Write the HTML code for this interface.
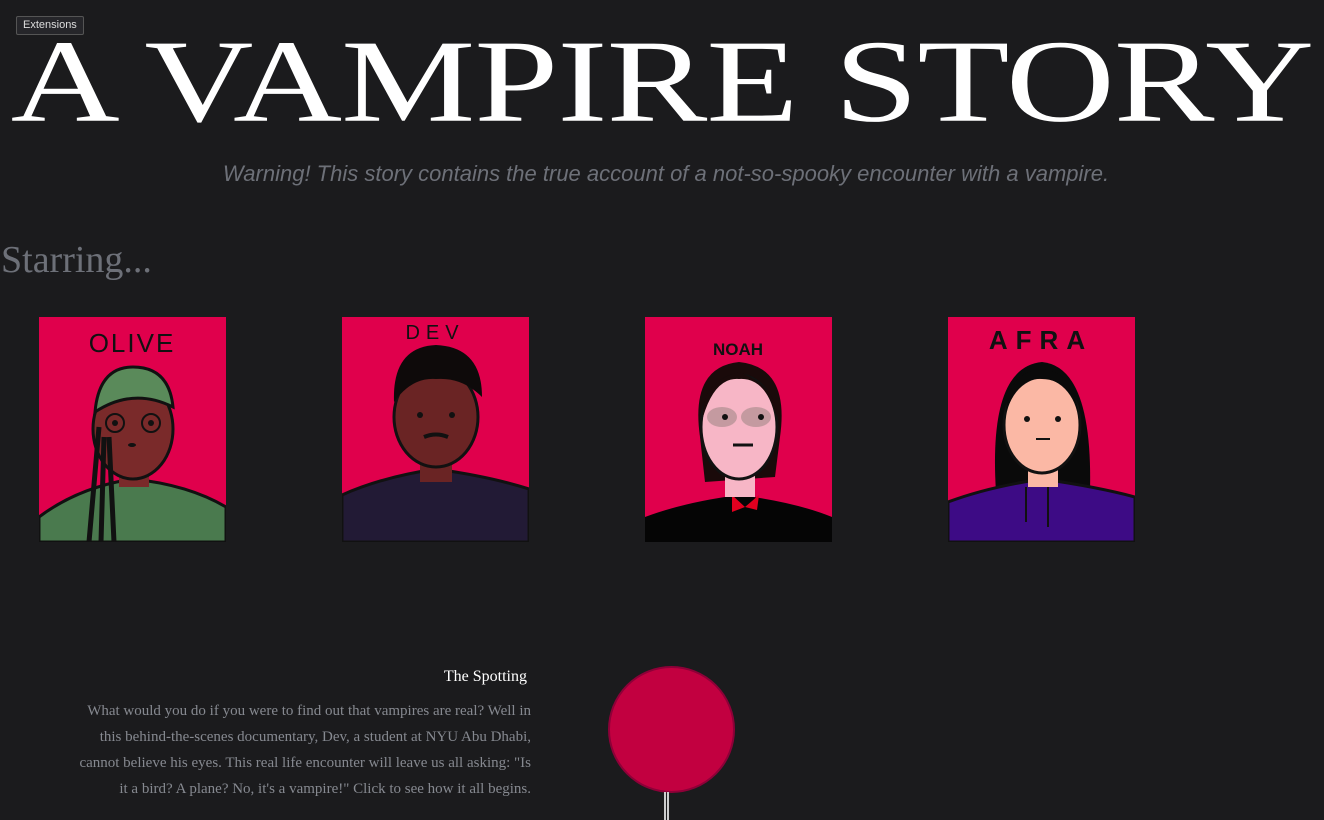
<!DOCTYPE html>
<html><head><meta charset="utf-8"><style>
html,body{margin:0;padding:0;background:#1b1b1d;width:1324px;height:820px;overflow:hidden}
body{position:relative;font-family:"Liberation Serif",serif}
.ext{position:absolute;left:16px;top:16px;height:17px;padding:0 6px;border:1px solid #555;background:#26262a;color:#ddd;font:11px "Liberation Sans",sans-serif;line-height:17px;border-radius:2px;z-index:2}
h1{position:absolute;left:0;top:-4px;width:1324px;margin:0;text-align:center;color:#fff;font-weight:normal;font-size:151px;line-height:170px;white-space:nowrap;letter-spacing:-1px;transform:scaleY(0.78);transform-origin:50% 50%}
.warn{position:absolute;left:0;width:1332px;top:161px;text-align:center;color:#6d7078;font:italic 22px "Liberation Sans",sans-serif}
.star{position:absolute;left:1px;top:238px;color:#6d7078;font-size:38px}
.p{position:absolute;top:317px;width:187px;height:225px}
.sp{position:absolute;right:797px;top:668px;color:#fff;font-size:16px}
.txt{position:absolute;right:793px;top:698px;width:462px;text-align:right;color:#868990;font-size:15px;line-height:26px}
.circ{position:absolute;left:608px;top:666px;width:123px;height:123px;border-radius:50%;background:#c20040;border:2px solid #8e0038}
.ln{position:absolute;left:664px;top:792px;width:2px;height:28px;background:#ccc;box-shadow:3px 0 0 #ccc}
</style></head><body>
<div class="ext">Extensions</div>
<h1>A VAMPIRE STORY</h1>
<div class="warn">Warning! This story contains the true account of a not-so-spooky encounter with a vampire.</div>
<div class="star">Starring...</div>

<svg class="p" style="left:39px" viewBox="0 0 187 225"><rect width="187" height="225" fill="#e0004c"/>
<text x="93" y="35" text-anchor="middle" font-family="Liberation Sans" font-size="26" fill="#111" letter-spacing="2">OLIVE</text>
<path d="M0 200 Q40 170 94 162 Q150 168 187 190 V225 H0Z" fill="#4a7a4e" stroke="#111" stroke-width="3"/>
<rect x="80" y="130" width="30" height="40" fill="#7a2a2a"/>
<ellipse cx="94" cy="112" rx="40" ry="50" fill="#7a2a2a" stroke="#111" stroke-width="3"/>
<path d="M56 95 Q60 50 94 50 Q130 50 134 90 Q94 70 56 95Z" fill="#5a8a5a" stroke="#111" stroke-width="3"/>
<path d="M60 110 L50 225 M65 120 L62 225 M70 120 L75 225" stroke="#111" stroke-width="5"/>
<circle cx="76" cy="106" r="9" fill="none" stroke="#111" stroke-width="2"/><circle cx="112" cy="106" r="9" fill="none" stroke="#111" stroke-width="2"/>
<circle cx="76" cy="106" r="3" fill="#111"/><circle cx="112" cy="106" r="3" fill="#111"/>
<ellipse cx="93" cy="128" rx="4" ry="2" fill="#111"/></svg>

<svg class="p" style="left:342px" viewBox="0 0 187 225"><rect width="187" height="225" fill="#e0004c"/>
<text x="93" y="22" text-anchor="middle" font-family="Liberation Sans" font-size="20" fill="#111" letter-spacing="6">DEV</text>
<path d="M0 178 Q40 160 94 152 Q150 160 187 172 V225 H0Z" fill="#221a35" stroke="#111" stroke-width="3"/>
<rect x="78" y="125" width="32" height="40" fill="#6a2424"/>
<ellipse cx="94" cy="100" rx="42" ry="50" fill="#6a2424" stroke="#111" stroke-width="3"/>
<path d="M52 85 Q50 30 94 28 Q140 30 140 80 Q120 60 94 62 Q70 60 52 85Z" fill="#0e0a0a"/>
<circle cx="78" cy="98" r="3" fill="#111"/><circle cx="110" cy="98" r="3" fill="#111"/>
<path d="M82 120 Q94 115 106 120" stroke="#111" stroke-width="4" fill="none"/></svg>

<svg class="p" style="left:645px" viewBox="0 0 187 225"><rect width="187" height="225" fill="#e0004c"/>
<text x="93" y="38" text-anchor="middle" font-family="Liberation Sans" font-weight="bold" font-size="17" fill="#111">NOAH</text>
<path d="M0 200 Q40 185 94 178 Q150 185 187 200 V225 H0Z" fill="#050505"/>
<path d="M87 178 L100 190 L114 178 L112 193 L100 190 L87 195Z" fill="#e2001f"/>
<path d="M55 120 Q45 50 94 45 Q145 50 135 120 L130 160 L60 165Z" fill="#1a0a0a"/>
<rect x="80" y="140" width="30" height="40" fill="#f7b6c6"/>
<ellipse cx="94" cy="110" rx="38" ry="52" fill="#f7b6c6" stroke="#111" stroke-width="3"/>
<path d="M58 100 Q70 60 94 62 Q120 60 132 100 Q132 70 94 55 Q56 65 58 100Z" fill="#1a0a0a"/>
<ellipse cx="77" cy="100" rx="15" ry="10" fill="#c49aa0"/><ellipse cx="111" cy="100" rx="15" ry="10" fill="#c49aa0"/>
<circle cx="80" cy="100" r="3" fill="#111"/><circle cx="116" cy="100" r="3" fill="#111"/>
<path d="M88 128 H108" stroke="#111" stroke-width="3"/></svg>

<svg class="p" style="left:948px" viewBox="0 0 187 225"><rect width="187" height="225" fill="#e0004c"/>
<text x="93" y="32" text-anchor="middle" font-family="Liberation Sans" font-weight="bold" font-size="26" fill="#111" letter-spacing="8">AFRA</text>
<path d="M48 175 Q40 50 94 45 Q145 50 142 175Z" fill="#0a0a0a"/>
<path d="M0 185 Q40 170 94 162 Q150 170 187 180 V225 H0Z" fill="#3d0b85" stroke="#111" stroke-width="3"/>
<rect x="80" y="135" width="30" height="35" fill="#fbb8a5"/>
<ellipse cx="94" cy="108" rx="38" ry="48" fill="#fbb8a5" stroke="#111" stroke-width="3"/>
<path d="M58 95 Q70 60 94 62 Q120 62 130 95 Q125 55 94 52 Q60 55 58 95Z" fill="#0a0a0a"/>
<circle cx="79" cy="102" r="3" fill="#111"/><circle cx="110" cy="102" r="3" fill="#111"/>
<path d="M88 122 H102" stroke="#111" stroke-width="2"/>
<path d="M78 170 V205 M100 170 V210" stroke="#111" stroke-width="2"/></svg>

<div class="sp">The Spotting</div>
<div class="txt">What would you do if you were to find out that vampires are real? Well in this behind-the-scenes documentary, Dev, a student at NYU Abu Dhabi, cannot believe his eyes. This real life encounter will leave us all asking: "Is it a bird? A plane? No, it's a vampire!" Click to see how it all begins.</div>
<div class="circ"></div>
<div class="ln"></div>
</body></html>
